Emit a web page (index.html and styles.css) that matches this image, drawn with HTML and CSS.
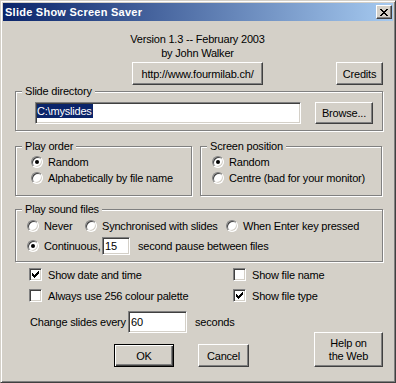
FILE: index.html
```html
<!DOCTYPE html>
<html lang="en">
<head>
    <meta charset="UTF-8">
    <title>Slide Show Screen Saver</title>
    <link rel="stylesheet" href="styles.css">
</head>
<body>
<div class="window">
    <!-- title bar -->
    <div class="titlebar">
        <span class="title">Slide Show Screen Saver</span>
        <button type="button" class="close">
            <svg width="8" height="7" viewBox="0 0 8 7" shape-rendering="crispEdges"><path d="M0 0h2v1h-2z M6 0h2v1h-2z M1 1h2v1h-2z M5 1h2v1h-2z M2 2h4v1h-4z M3 3h2v1h-2z M2 4h4v1h-4z M1 5h2v1h-2z M5 5h2v1h-2z M0 6h2v1h-2z M6 6h2v1h-2z"/></svg>
        </button>
    </div>

    <div class="dialog">
        <div class="about">
            <p>Version 1.3 -- February 2003</p>
            <p>by John Walker</p>
        </div>
        <div class="link-row">
            <button type="button" class="btn url-btn">http://www.fourmilab.ch/</button>
            <button type="button" class="btn credits-btn">Credits</button>
        </div>

        <!-- slide directory -->
        <div class="group dir-group">
            <span class="group-label">Slide directory</span>
            <div class="dir-row">
                <div class="field dir-field"><span class="selected">C:\myslides</span></div>
                <button type="button" class="btn browse-btn">Browse...</button>
            </div>
        </div>

        <!-- order and position -->
        <div class="group-pair">
            <div class="group">
                <span class="group-label">Play order</span>
                <div class="radio-list order-list">
                    <div class="radio-line"><span class="radio on"></span>Random</div>
                    <div class="radio-line"><span class="radio"></span>Alphabetically by file name</div>
                </div>
            </div>
            <div class="group">
                <span class="group-label">Screen position</span>
                <div class="radio-list position-list">
                    <div class="radio-line"><span class="radio on"></span>Random</div>
                    <div class="radio-line"><span class="radio"></span>Centre (bad for your monitor)</div>
                </div>
            </div>
        </div>

        <!-- sound -->
        <div class="group sound-group">
            <span class="group-label">Play sound files</span>
            <div class="sound-row">
                <div class="radio-line"><span class="radio"></span>Never</div>
                <div class="radio-line"><span class="radio"></span>Synchronised with slides</div>
                <div class="radio-line"><span class="radio"></span>When Enter key pressed</div>
            </div>
            <div class="pause-row">
                <div class="radio-line continuous"><span class="radio on"></span>Continuous,</div>
                <div class="field pause-field">15</div>
                <span class="pause-text">second pause between files</span>
            </div>
        </div>

        <!-- options -->
        <div class="checks">
            <div class="check-line"><span class="check on"><svg width="7" height="7" viewBox="0 0 7 7" shape-rendering="crispEdges"><path d="M6 0h1v1h-1z M5 1h2v1h-2z M0 2h1v1h-1z M4 2h3v1h-3z M0 3h2v1h-2z M3 3h3v1h-3z M0 4h5v1h-5z M1 5h3v1h-3z M2 6h1v1h-1z"/></svg></span>Show date and time</div>
            <div class="check-line"><span class="check"></span>Show file name</div>
            <div class="check-line"><span class="check"></span>Always use 256 colour palette</div>
            <div class="check-line"><span class="check on"><svg width="7" height="7" viewBox="0 0 7 7" shape-rendering="crispEdges"><path d="M6 0h1v1h-1z M5 1h2v1h-2z M0 2h1v1h-1z M4 2h3v1h-3z M0 3h2v1h-2z M3 3h3v1h-3z M0 4h5v1h-5z M1 5h3v1h-3z M2 6h1v1h-1z"/></svg></span>Show file type</div>
        </div>

        <div class="change-row">
            <span class="change-label">Change slides every</span>
            <div class="field change-field">60</div>
            <span class="seconds">seconds</span>
        </div>

        <div class="button-row">
            <button type="button" class="btn ok-btn">OK</button>
            <button type="button" class="btn cancel-btn">Cancel</button>
            <button type="button" class="btn help-btn">Help on<br>the Web</button>
        </div>
    </div>
</div>
</body>
</html>
```

FILE: styles.css
```css
*{
    margin: 0;
    padding: 0;
    box-sizing: border-box;
}
body{
    font-family: "Liberation Sans", Arial, sans-serif;
    font-size: 11px;
    letter-spacing: -0.2px;
    color: #000;
    background: #d4d0c8;
}
.window{
    width: 396px;
    height: 383px;
    padding: 2px;
    border: 1px solid;
    border-color: #d4d0c8 #404040 #404040 #d4d0c8;
    box-shadow: inset 1px 1px #fff, inset -1px -1px #808080;
    background: #d4d0c8;
}
.titlebar{
    display: flex;
    align-items: center;
    height: 18px;
    padding: 0 1px 0 2px;
    background: linear-gradient(to right, #0a246a, #a6caf0);
}
.title{
    flex: 1;
    color: #fff;
    font-weight: bold;
    letter-spacing: 0.25px;
}
.close{
    display: flex;
    align-items: center;
    justify-content: center;
    width: 16px;
    height: 14px;
    border: 1px solid;
    border-color: #fff #404040 #404040 #fff;
    box-shadow: inset -1px -1px #808080;
    background: #d4d0c8;
}
.btn{
    font: inherit;
    letter-spacing: inherit;
    color: #000;
    background: #d4d0c8;
    border: 1px solid;
    border-color: #fff #404040 #404040 #fff;
    box-shadow: inset -1px -1px #808080;
    height: 23px;
}
.dialog{
    padding: 0 10px 0 12px;
}
.about{
    margin-top: 11px;
    padding-right: 3px;
    text-align: center;
    line-height: 14px;
}
.link-row{
    display: flex;
    margin-top: 2px;
}
.url-btn{
    margin-left: 117px;
    width: 131px;
}
.credits-btn{
    margin-left: auto;
    width: 47px;
}

/* etched group boxes */
.group{
    border: 1px solid #808080;
    box-shadow: inset 1px 1px #fff, 1px 1px #fff;
}
.group-label{
    display: block;
    width: fit-content;
    margin: -7px 0 0 6px;
    padding: 0 3px;
    line-height: 13px;
    background: #d4d0c8;
}
.dir-group{
    margin-top: 6px;
}
.dir-row{
    display: flex;
    padding: 4px 0 6px 19px;
}
.field{
    background: #fff;
    border: 1px solid;
    border-color: #808080 #fff #fff #808080;
    box-shadow: inset 1px 1px #404040, inset -1px -1px #d4d0c8;
    padding: 1px;
}
.dir-field{
    width: 266px;
    height: 22px;
}
.selected{
    display: inline-block;
    background: #0a246a;
    color: #fff;
    line-height: 14px;
    padding: 0 1px 0 0;
}
.browse-btn{
    margin-left: 14px;
    width: 58px;
    height: 22px;
}
.group-pair{
    display: grid;
    grid-template-columns: 177px 182px;
    column-gap: 8px;
    margin-top: 15px;
}
.radio-list{
    padding: 1px 0 9px 15px;
}
.position-list{
    padding-left: 11px;
}
.radio-line{
    display: flex;
    align-items: center;
    gap: 5px;
    height: 16px;
    white-space: nowrap;
}
.radio{
    position: relative;
    flex: none;
    width: 12px;
    height: 12px;
    border-radius: 50%;
    background: #fff;
    border: 1px solid;
    border-color: #808080 #fff #fff #808080;
    box-shadow: inset 1px 1px #404040, inset -1px -1px #d4d0c8;
}
.radio.on::after{
    content: '';
    position: absolute;
    left: 3px;
    top: 3px;
    width: 4px;
    height: 4px;
    border-radius: 50%;
    background: #000;
}
.sound-group{
    margin-top: 13px;
}
.sound-row{
    display: grid;
    grid-template-columns: 58px 141px auto;
    padding: 1px 0 0 11px;
}
.sound-row .radio-line{
    height: 18px;
}
.pause-row{
    display: flex;
    align-items: center;
    margin-top: 2px;
    padding: 0 0 6px 11px;
}
.continuous{
    width: 75px;
}
.pause-field{
    width: 28px;
    height: 18px;
    padding: 1px 2px;
    line-height: 14px;
}
.pause-text{
    margin-left: 8px;
}
.checks{
    display: grid;
    grid-template-columns: 204px auto;
    margin-top: 2px;
    padding-left: 14px;
}
.check-line{
    display: flex;
    align-items: center;
    gap: 6px;
    height: 21px;
}
.check{
    display: flex;
    align-items: center;
    justify-content: center;
    flex: none;
    width: 13px;
    height: 13px;
    background: #fff;
    border: 1px solid;
    border-color: #808080 #fff #fff #808080;
    box-shadow: inset 1px 1px #404040, inset -1px -1px #d4d0c8;
}
.change-row{
    display: flex;
    align-items: center;
    height: 22px;
    margin-top: 5px;
    padding-left: 15px;
}
.change-label{
    width: 98px;
}
.change-field{
    width: 59px;
    height: 22px;
    padding: 2px 2px;
    line-height: 16px;
}
.seconds{
    margin-left: 8px;
}
.button-row{
    display: flex;
    align-items: flex-end;
    height: 35px;
    margin-top: -1px;
}
.ok-btn{
    margin-left: 99px;
    width: 60px;
    border-color: #000;
    box-shadow: inset 1px 1px #fff, inset -1px -1px #404040, inset -2px -2px #808080;
}
.cancel-btn{
    margin-left: 24px;
    width: 51px;
}
.help-btn{
    margin-left: auto;
    width: 69px;
    height: 35px;
    line-height: 13px;
}
```
